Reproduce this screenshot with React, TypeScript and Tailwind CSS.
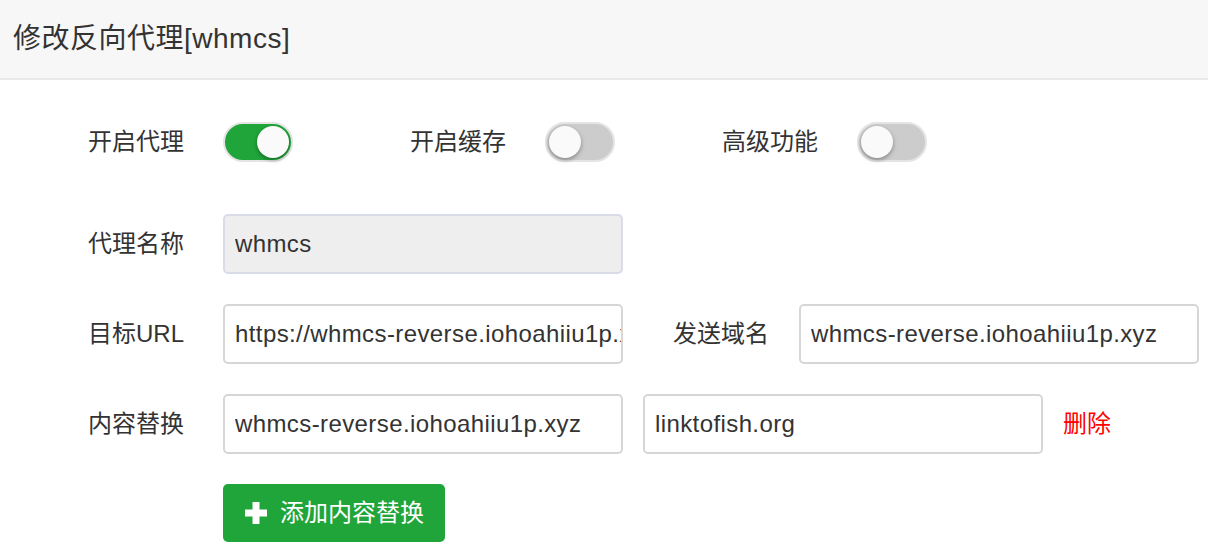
import React from "react";

const FONT = { fontFamily: '"Liberation Sans", "Noto Sans CJK SC", sans-serif' };

function Toggle({ on }: { on: boolean }) {
  return (
    <div
      className={`relative w-[70px] h-[40px] rounded-full border-2 border-[#e4e4e4] ${
        on ? "bg-[#20a53a]" : "bg-[#cccccc]"
      }`}
    >
      <div
        className={`absolute top-[2px] w-[32px] h-[32px] rounded-full bg-[#fafafa] shadow-[0_2px_4px_rgba(0,0,0,0.35)] ${
          on ? "left-[32px]" : "left-[2px]"
        }`}
      />
    </div>
  );
}

function Field({ value, disabled, w = "w-[400px]" }: { value: string; disabled?: boolean; w?: string }) {
  return (
    <input
      readOnly
      value={value}
      className={`${w} h-[60px] rounded-[5px] border-2 pl-[10px] pr-0 text-[24px] tracking-[0.4px] text-[#333] outline-none ${
        disabled ? "bg-[#eeeeee] border-[#dadbe8]" : "bg-white border-[#d6d6d6]"
      }`}
      style={FONT}
    />
  );
}

export default function App() {
  return (
    <div className="w-[1208px] h-[556px] bg-white overflow-hidden text-[#333]" style={FONT}>
      <div className="h-[80px] bg-[#f7f7f7] border-b-2 border-[#e9e9e9] flex items-center pl-[13px]">
        <span className="text-[28px] tracking-[0.5px] text-[#333]">修改反向代理[whmcs]</span>
      </div>

      <div className="pl-[88px] pt-[42px] flex flex-col">
        <div className="flex items-center h-[40px] text-[24px]">
          <span className="w-[135px]">开启代理</span>
          <Toggle on />
          <span className="ml-[117px] w-[135px]">开启缓存</span>
          <Toggle on={false} />
          <span className="ml-[107px] w-[135px]">高级功能</span>
          <Toggle on={false} />
        </div>

        <div className="mt-[52px] flex flex-col gap-[30px] text-[24px]">
          <div className="flex items-center">
            <span className="w-[135px]">代理名称</span>
            <Field value="whmcs" disabled />
          </div>
          <div className="flex items-center">
            <span className="w-[135px]">目标URL</span>
            <Field value="https://whmcs-reverse.iohoahiiu1p.xyz" />
            <span className="ml-[50px] w-[126px]">发送域名</span>
            <Field value="whmcs-reverse.iohoahiiu1p.xyz" />
          </div>
          <div className="flex items-center">
            <span className="w-[135px]">内容替换</span>
            <Field value="whmcs-reverse.iohoahiiu1p.xyz" />
            <Field value="linktofish.org" w="w-[400px] ml-[20px]" />
            <span className="ml-[20px] text-[#ff0000]">删除</span>
          </div>
          <div className="flex items-center pl-[135px]">
            <button className="h-[58px] w-[222px] rounded-[5px] bg-[#20a53a] flex items-center pl-[22px] text-white text-[24px]">
              <svg width="22" height="22" viewBox="0 0 22 22" className="mr-[13px]">
                <rect x="7.5" y="0" width="7" height="22" fill="white" />
                <rect x="0" y="7.5" width="22" height="7" fill="white" />
              </svg>
              添加内容替换
            </button>
          </div>
        </div>
      </div>
    </div>
  );
}
